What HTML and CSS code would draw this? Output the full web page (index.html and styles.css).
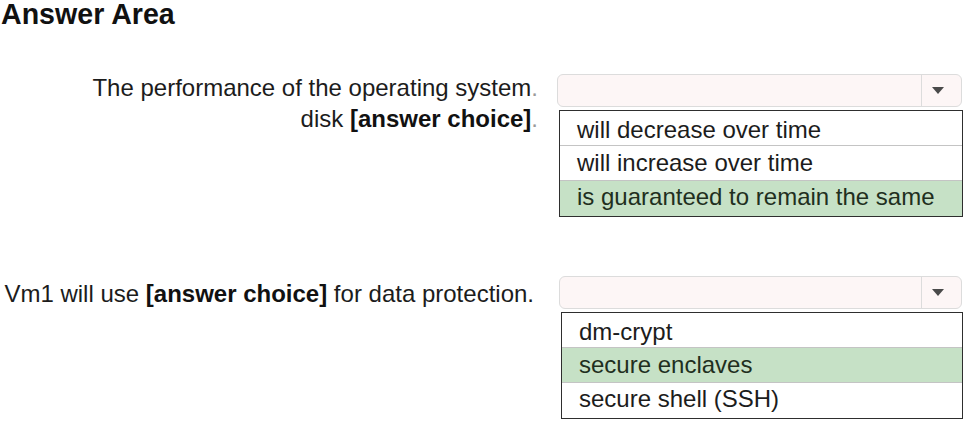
FILE: index.html
```html
<!DOCTYPE html>
<html>
<head>
<meta charset="utf-8">
<link rel="stylesheet" href="styles.css">
</head>
<body>
<h1 class="title">Answer Area</h1>

<div class="question q1">
  <div class="label">
    <div>The performance of the operating system<span class="dot">.</span></div>
    <div>disk <b>[answer choice]</b><span class="dot">.</span></div>
  </div>
  <div class="choice">
    <div class="select">
      <div class="field"></div>
      <div class="btn"><span class="arrow"></span></div>
    </div>
    <ul class="options">
      <li>will decrease over time</li>
      <li>will increase over time</li>
      <li class="sel">is guaranteed to remain the same</li>
    </ul>
  </div>
</div>

<div class="question q2">
  <div class="label">
    <div>Vm1 will use <b>[answer choice]</b> for data protection.</div>
  </div>
  <div class="choice">
    <div class="select">
      <div class="field"></div>
      <div class="btn"><span class="arrow"></span></div>
    </div>
    <ul class="options">
      <li>dm-crypt</li>
      <li class="sel">secure enclaves</li>
      <li>secure shell (SSH)</li>
    </ul>
  </div>
</div>
</body>
</html>
```

FILE: styles.css
```css
html, body {
  margin: 0;
  padding: 0;
  background: #ffffff;
}
body {
  font-family: "Liberation Sans", Arial, sans-serif;
  font-size: 24px;
  color: #1c1c1c;
  width: 965px;
  height: 422px;
  overflow: hidden;
}
.title {
  margin: 0;
  padding-left: 1px;
  font-size: 28.6px;
  font-weight: bold;
  line-height: 28px;
  height: 26px;
  overflow: visible;
  color: #111;
}
.question {
  display: grid;
  grid-template-columns: 538px 405px;
  column-gap: 19px;
}
.q1 {
  margin-top: 46px;
}
.q2 {
  margin-top: 59px;
}
.q2 .label {
  padding-top: 2px;
  padding-right: 4px;
}
.q2 .choice {
  padding-left: 2px;
}
.label {
  text-align: right;
  line-height: 31px;
  white-space: nowrap;
}
.label b {
  font-weight: bold;
  color: #111;
}
.dot {
  color: #9a9a9a;
}
.q1 .select {
  margin-top: 2px;
}
.select {
  display: flex;
  height: 33px;
  box-sizing: border-box;
  border: 1px solid #dcdcdc;
  border-radius: 6px;
  background: #fdf6f6;
}
.field {
  flex: 1;
}
.btn {
  width: 40px;
  border-left: 1px solid #dcdcdc;
  display: flex;
  align-items: center;
  justify-content: center;
  padding-right: 7px;
  box-sizing: border-box;
}
.arrow {
  width: 0;
  height: 0;
  border-left: 6px solid transparent;
  border-right: 6px solid transparent;
  border-top: 7px solid #4a4a4a;
}
.options {
  list-style: none;
  margin: 3px 0 0 2px;
  padding: 0;
  width: 404px;
  box-sizing: border-box;
  border: 1px solid #2e2e2e;
}
.q2 .options {
  width: 402px;
}
.options li {
  height: 35px;
  box-sizing: border-box;
  padding: 1px 0 0 17px;
  line-height: 32px;
  border-bottom: 1px solid #c4c4c4;
  white-space: nowrap;
}
.options li:first-child {
  padding-top: 3px;
}
.options li:last-child {
  border-bottom: none;
  padding-top: 0;
}
.options li.sel {
  background: #c6e1c6;
  color: #1f2f20;
}
```
